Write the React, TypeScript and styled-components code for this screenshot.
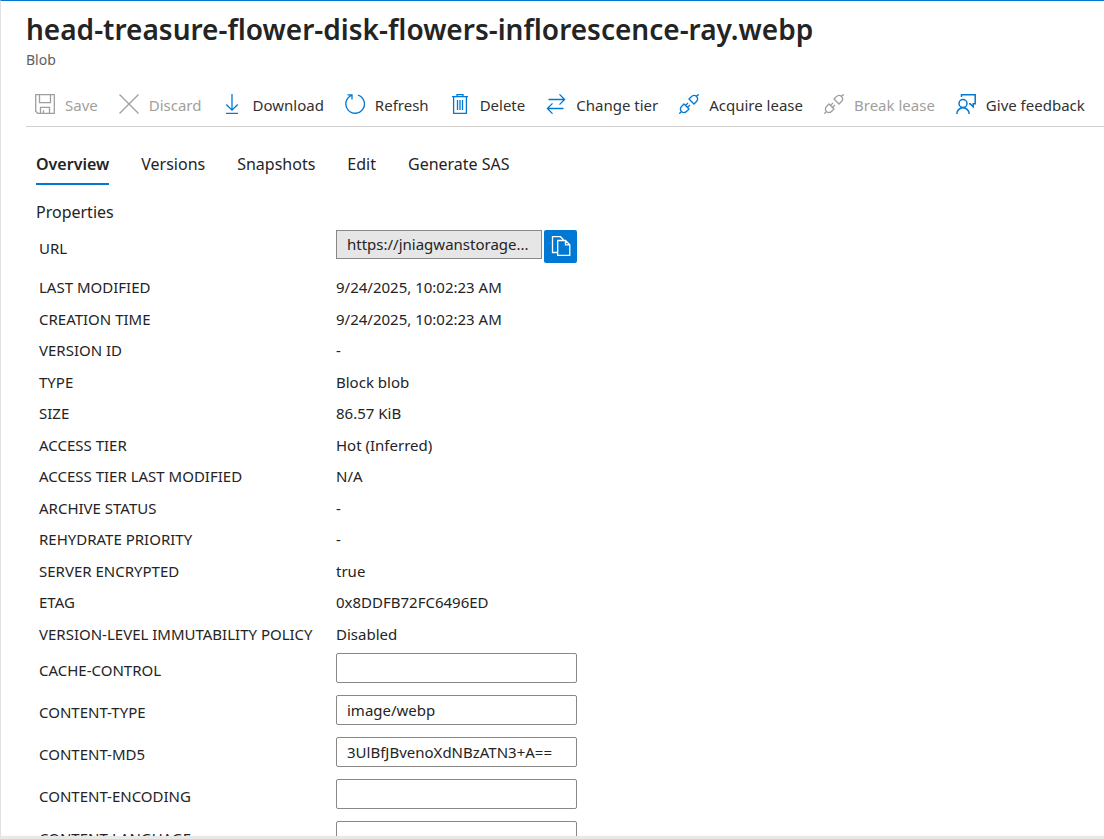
import React, { useState } from "react";
import styled, { createGlobalStyle } from "styled-components";

const Global = createGlobalStyle`
  *, *::before, *::after { box-sizing: border-box; }
  body {
    margin: 0;
    background: #fff;
    color: #242424;
    font-family: "Noto Sans", "Open Sans", sans-serif;
    font-size: 15px;
    line-height: 20px;
  }
  button, input { font: inherit; color: inherit; }
`;

const Blade = styled.main`
  display: flex;
  flex-direction: column;
  height: 100vh;
  overflow: hidden;
  border-top: 1px solid #0078d4;
  border-left: 1px solid #e1e1e1;
  border-bottom: 3px solid #e8e8e8;
`;

const Header = styled.header`
  padding: 8px 25px 0;
`;

const Title = styled.h1`
  margin: 0;
  font-size: 28px;
  font-weight: 600;
  line-height: 40px;
  white-space: nowrap;
`;

const Subtitle = styled.p`
  margin: 0;
  color: #605e5c;
  font-size: 14px;
  line-height: 22px;
`;

const Toolbar = styled.div`
  display: flex;
  flex: none;
  align-items: center;
  gap: 21px;
  height: 45px;
  margin: 11px 0 0 25px;
  padding: 0 0 0 9px;
  border-bottom: 1px solid #d2d0ce;
`;

const Command = styled.button`
  display: flex;
  flex: none;
  align-items: center;
  gap: 10px;
  padding: 0;
  border: 0;
  background: none;
  white-space: nowrap;
  color: #323130;
  svg { color: #0078d4; }
  &:disabled, &:disabled svg { color: #a19f9d; }
`;

const CommandLabel = styled.span`
  padding-top: 2px;
`;

const Icon = styled.svg`
  display: block;
  flex: none;
  width: 20px;
  height: 20px;
  fill: none;
  stroke: currentColor;
  stroke-width: 1.3;
`;

const Tabs = styled.div`
  display: flex;
  flex: none;
  gap: 32px;
  padding: 21px 35px 0;
`;

const Tab = styled.button<{ $active: boolean }>`
  height: 37px;
  padding: 0 0 4px;
  border: 0;
  border-bottom: 2px solid ${(p) => (p.$active ? "#0078d4" : "transparent")};
  background: none;
  font-size: 16px;
  font-weight: ${(p) => (p.$active ? 600 : 400)};
  white-space: nowrap;
`;

const Content = styled.section`
  flex: 1;
  min-height: 0;
  overflow: hidden;
  padding: 15px 35px 0;
`;

const SectionTitle = styled.h2`
  margin: 0;
  font-size: 16px;
  font-weight: 400;
  line-height: 24px;
`;

const Table = styled.table`
  border-collapse: collapse;
  margin-top: 1px;
`;

const Row = styled.tr<{ $kind: "url" | "text" | "field" }>`
  height: ${(p) => ({ url: 46, text: 32, field: 42 })[p.$kind]}px;
  &:nth-child(odd) {
    height: ${(p) => ({ url: 46, text: 31, field: 42 })[p.$kind]}px;
  }
`;

const Name = styled.th`
  width: 300px;
  padding: 0 0 0 3px;
  font-weight: 400;
  text-align: left;
  white-space: nowrap;
`;

const Value = styled.td`
  padding: 0;
  white-space: nowrap;
`;

const FieldValue = styled(Value)`
  padding-bottom: 4px;
`;

const Field = styled.input`
  display: block;
  width: 241px;
  height: 30px;
  padding: 0 10px;
  border: 1px solid #8a8886;
  border-radius: 2px;
  background: #fff;
`;

const UrlGroup = styled.div`
  display: flex;
  gap: 2px;
`;

const UrlField = styled(Field)`
  width: 206px;
  height: 29px;
  border-radius: 0;
  background: #e6e6e6;
  text-overflow: ellipsis;
`;

const CopyButton = styled.button`
  display: flex;
  align-items: center;
  justify-content: center;
  width: 33px;
  height: 33px;
  padding: 0;
  border: 0;
  border-radius: 2px;
  background: #0078d4;
  color: #fff;
`;

const plug = (
  <path d="M.3 19.700l2.200-2.200M17.500 2.500l2.200-2.200M10 5l5 5 2-2c2-2 2-4 .5-5.500s-3.500-1.500-5.500.5zM5 10l5 5-2 2c-2 2-4 2-5.500.5s-1.500-3.500.5-5.500zM6.500 11.500L9 9M8.500 13.500L11 11" />
);

const icons: Record<string, React.ReactNode> = {
  Save: <path d="M.7.7h18.600v18.600H2.700l-2-2zM4.500.7v8h11v-8M5.500 19.300v-6h9v6M8.500 19.300v-3" />,
  Discard: <path d="M.5.5l19 19M19.500.5l-19 19" />,
  Download: <path d="M10 0v16M4.300 10.500L10 16.200l5.700-5.700M4 19.400h12" />,
  Refresh: <path d="M13 1.100a9.300 9.300 0 1 1-6.500.3M2.500.9H7v4.600" />,
  Delete: <path d="M2 2.600h16M7 2.600v-2h6v2M3.600 2.600v16.700h12.800V2.600M7.500 6v10M10 6v10M12.500 6v10" />,
  "Change tier": <path d="M2.500 5.500h16M13.500.4l5.100 5.100-5.100 5.100M17.500 14.500h-16M6.500 9.400l-5.100 5.100 5.100 5.100" />,
  "Acquire lease": plug,
  "Break lease": plug,
  "Give feedback": (
    <path strokeWidth="1.5" d="M5.500 3V.8h13.700v8.900h-2v3L14 9.700h-1M7 5.500a4 4 0 1 1 0 8 4 4 0 0 1 0-8zM.8 20a6.200 6.200 0 0 1 12.400 0" />
  ),
};

const commands = [
  { label: "Save", disabled: true },
  { label: "Discard", disabled: true },
  { label: "Download" },
  { label: "Refresh" },
  { label: "Delete" },
  { label: "Change tier" },
  { label: "Acquire lease" },
  { label: "Break lease", disabled: true },
  { label: "Give feedback" },
];

const tabs = ["Overview", "Versions", "Snapshots", "Edit", "Generate SAS"];

const properties = [
  ["LAST MODIFIED", "9/24/2025, 10:02:23 AM"],
  ["CREATION TIME", "9/24/2025, 10:02:23 AM"],
  ["VERSION ID", "-"],
  ["TYPE", "Block blob"],
  ["SIZE", "86.57 KiB"],
  ["ACCESS TIER", "Hot (Inferred)"],
  ["ACCESS TIER LAST MODIFIED", "N/A"],
  ["ARCHIVE STATUS", "-"],
  ["REHYDRATE PRIORITY", "-"],
  ["SERVER ENCRYPTED", "true"],
  ["ETAG", "0x8DDFB72FC6496ED"],
  ["VERSION-LEVEL IMMUTABILITY POLICY", "Disabled"],
];

const fields = [
  ["CACHE-CONTROL", ""],
  ["CONTENT-TYPE", "image/webp"],
  ["CONTENT-MD5", "3UlBfJBvenoXdNBzATN3+A=="],
  ["CONTENT-ENCODING", ""],
  ["CONTENT-LANGUAGE", ""],
];

export default function App() {
  const [active, setActive] = useState("Overview");
  return (
    <>
      <Global />
      <Blade>
        <Header>
          <Title>head-treasure-flower-disk-flowers-inflorescence-ray.webp</Title>
          <Subtitle>Blob</Subtitle>
        </Header>
        <Toolbar role="toolbar">
          {commands.map((c) => (
            <Command key={c.label} disabled={c.disabled}>
              <Icon viewBox="0 0 20 20" aria-hidden="true">{icons[c.label]}</Icon>
              <CommandLabel>{c.label}</CommandLabel>
            </Command>
          ))}
        </Toolbar>
        <Tabs role="tablist">
          {tabs.map((t) => (
            <Tab key={t} role="tab" aria-selected={t === active} $active={t === active} onClick={() => setActive(t)}>
              {t}
            </Tab>
          ))}
        </Tabs>
        <Content>
          <SectionTitle>Properties</SectionTitle>
          <Table>
            <tbody>
              <Row $kind="url">
                <Name scope="row"><label htmlFor="url">URL</label></Name>
                <FieldValue>
                  <UrlGroup>
                    <UrlField id="url" readOnly value="https://jniagwanstorage..." />
                    <CopyButton aria-label="Copy to clipboard">
                      <Icon viewBox="0 0 20 20" aria-hidden="true">
                        <path d="M6.500 16.500h-5V.7h8l3 3M6.700 4.500h7.800l4.300 4.300v10.500H6.700zM14.500 4.500v4.300h4.300" />
                      </Icon>
                    </CopyButton>
                  </UrlGroup>
                </FieldValue>
              </Row>
              {properties.map(([name, value]) => (
                <Row key={name} $kind="text">
                  <Name scope="row">{name}</Name>
                  <Value>{value}</Value>
                </Row>
              ))}
              {fields.map(([name, value]) => (
                <Row key={name} $kind="field">
                  <Name scope="row"><label htmlFor={name}>{name}</label></Name>
                  <FieldValue><Field id={name} defaultValue={value} /></FieldValue>
                </Row>
              ))}
            </tbody>
          </Table>
        </Content>
      </Blade>
    </>
  );
}
